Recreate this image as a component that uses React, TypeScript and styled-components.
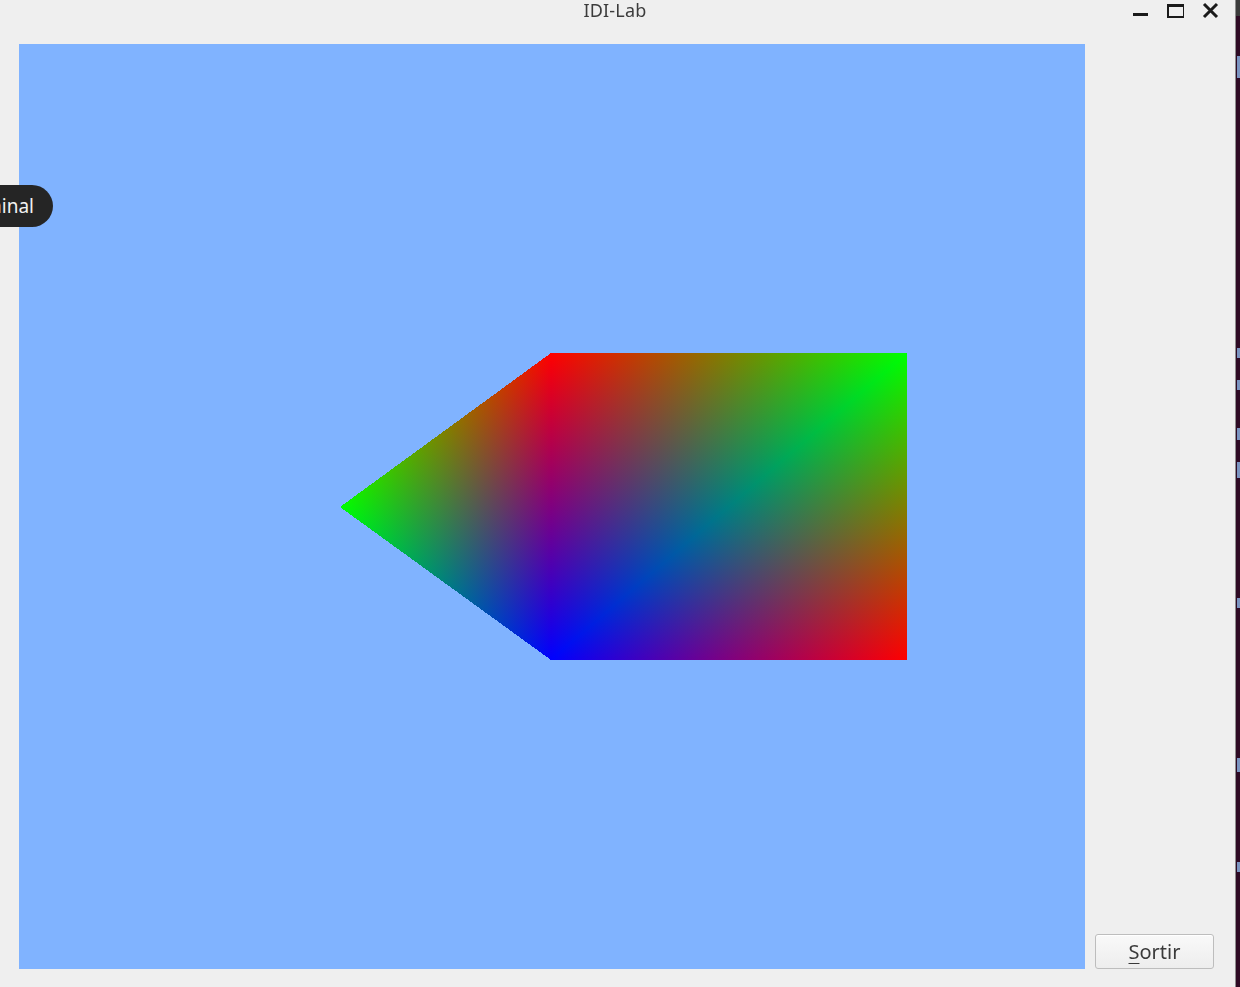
import React from "react";
import styled, { createGlobalStyle } from "styled-components";

const Global = createGlobalStyle`
  html, body { margin: 0; padding: 0; background: #efefef; overflow: hidden; }
  #root { width: 1240px; height: 987px; }
`;

const Screen = styled.div`
  display: flex;
  width: 1240px;
  height: 987px;
  position: relative;
  overflow: hidden;
`;

const Win = styled.div`
  width: 1235px;
  height: 987px;
  background: #efefef;
  display: flex;
  flex-direction: column;
`;

const TitleBar = styled.div`
  height: 44px;
  position: relative;
  display: flex;
  justify-content: center;
  align-items: flex-start;
`;

const Title = styled.div`
  font-family: "Noto Sans", "DejaVu Sans", sans-serif;
  font-size: 18px;
  line-height: 20px;
  color: #3c3c3c;
  margin-top: 0;
  margin-left: -5px;
  letter-spacing: 0.2px;
`;

const Controls = styled.div`
  position: absolute;
  top: 2px;
  right: 16px;
  display: flex;
  gap: 18px;
  align-items: flex-start;
`;

const Body = styled.div`
  flex: 1;
  display: flex;
  padding: 0 0 18px 19px;
`;

const GLView = styled.div`
  width: 1066px;
  height: 925px;
  background: #80b3ff;
`;

const Side = styled.div`
  flex: 1;
  display: flex;
  flex-direction: column;
  justify-content: flex-end;
  padding: 0 21px 0 10px;
`;

const Button = styled.button`
  height: 35px;
  width: 119px;
  border: 1px solid #bdbdbd;
  border-radius: 3px;
  background: linear-gradient(#f9f9f9, #ededed);
  font-family: "Noto Sans", "DejaVu Sans", sans-serif;
  font-size: 20px;
  color: #3a3a3a;
  padding: 0;
  display: flex;
  align-items: center;
  justify-content: center;
  box-shadow: inset 0 1px 0 #ffffff;
`;

const Mnemonic = styled.span`
  text-decoration: underline;
  text-underline-offset: 4px;
  text-decoration-thickness: 1px;
`;

const Strip = styled.div`
  width: 5px;
  height: 987px;
  background: #2e0a24;
  border-left: 1px solid #8d8d8d;
  box-sizing: border-box;
  display: flex;
  flex-direction: column;
`;

const StripTop = styled.div`
  height: 16px;
  background: #3b3b3b;
`;

const Mark = styled.div<{ $top: number; $h: number }>`
  margin-top: ${(p) => p.$top}px;
  height: ${(p) => p.$h}px;
  margin-left: 1px;
  width: 3px;
  background: #8fb6e8;
  opacity: 0.8;
`;

const TipClip = styled.div`
  position: absolute;
  left: 0;
  top: 185px;
  width: 53px;
  height: 42px;
  overflow: hidden;
  display: flex;
  justify-content: flex-end;
`;

const Tip = styled.div`
  flex-shrink: 0;
  height: 42px;
  background: #252525;
  border-radius: 21px;
  padding: 0 19px 0 16px;
  display: flex;
  align-items: center;
  font-family: "Noto Sans", "DejaVu Sans", sans-serif;
  font-size: 19px;
  color: #f2f2f2;
  white-space: nowrap;
`;

type P = [number, number];
type Tri = { pts: [P, P, P]; cols: [string, string, string] };

const L: P = [321, 463];
const TL: P = [532, 309];
const TR: P = [888, 309];
const BR: P = [888, 616];
const BL: P = [532, 616];

const tris: Tri[] = [
  { pts: [L, TL, BL], cols: ["#00ff00", "#ff0000", "#0000ff"] },
  { pts: [TL, TR, BL], cols: ["#ff0000", "#00ff00", "#0000ff"] },
  { pts: [TR, BR, BL], cols: ["#00ff00", "#ff0000", "#0000ff"] },
];

function foot(v: P, p: P, q: P): P {
  const dx = q[0] - p[0];
  const dy = q[1] - p[1];
  const t = ((v[0] - p[0]) * dx + (v[1] - p[1]) * dy) / (dx * dx + dy * dy);
  return [p[0] + t * dx, p[1] + t * dy];
}

function Shape() {
  const grads: React.ReactNode[] = [];
  const polys: React.ReactNode[] = [];
  tris.forEach((tr, i) => {
    const ptsStr = tr.pts.map((p) => p.join(",")).join(" ");
    tr.pts.forEach((v, j) => {
      const p = tr.pts[(j + 1) % 3];
      const q = tr.pts[(j + 2) % 3];
      const f = foot(v, p, q);
      const id = `g${i}_${j}`;
      grads.push(
        <linearGradient
          key={id}
          id={id}
          gradientUnits="userSpaceOnUse"
          x1={v[0]}
          y1={v[1]}
          x2={f[0]}
          y2={f[1]}
        >
          <stop offset="0" stopColor={tr.cols[j]} />
          <stop offset="1" stopColor="#000000" />
        </linearGradient>
      );
      polys.push(
        <polygon
          key={id}
          points={ptsStr}
          fill={`url(#${id})`}
          shapeRendering="crispEdges"
          style={{ mixBlendMode: "screen" }}
        />
      );
    });
  });
  return (
    <svg width="1066" height="925" viewBox="0 0 1066 925">
      <defs>{grads}</defs>
      <g style={{ isolation: "isolate" }}>{polys}</g>
    </svg>
  );
}

export default function App() {
  return (
    <Screen>
      <Global />
      <Win>
        <TitleBar>
          <Title>IDI-Lab</Title>
          <Controls>
            <svg width="17" height="17" viewBox="0 0 17 17">
              <rect x="1" y="11" width="15" height="3" fill="#1a1a1a" />
            </svg>
            <svg width="17" height="17" viewBox="0 0 17 17">
              <rect x="1" y="3" width="16" height="12" fill="none" stroke="#1a1a1a" strokeWidth="2" />
              <rect x="1" y="2" width="16" height="3" fill="#1a1a1a" />
            </svg>
            <svg width="17" height="17" viewBox="0 0 17 17">
              <path d="M2 2 L15 15 M15 2 L2 15" stroke="#1a1a1a" strokeWidth="3" />
            </svg>
          </Controls>
        </TitleBar>
        <Body>
          <GLView>
            <Shape />
          </GLView>
          <Side>
            <Button>
              <Mnemonic>S</Mnemonic>ortir
            </Button>
          </Side>
        </Body>
      </Win>
      <Strip>
        <StripTop />
        <Mark $top={40} $h={22} />
        <Mark $top={270} $h={10} />
        <Mark $top={22} $h={10} />
        <Mark $top={38} $h={12} />
        <Mark $top={22} $h={16} />
        <Mark $top={120} $h={10} />
        <Mark $top={150} $h={14} />
        <Mark $top={90} $h={10} />
      </Strip>
      <TipClip>
        <Tip>Terminal</Tip>
      </TipClip>
    </Screen>
  );
}
